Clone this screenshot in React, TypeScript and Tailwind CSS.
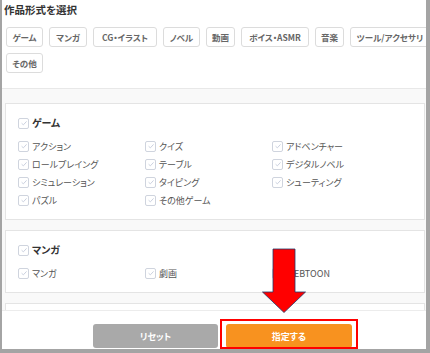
import React from "react";

const font = "font-['Noto_Sans_CJK_JP','Noto_Sans',sans-serif] [font-feature-settings:'palt']";

function Check() {
  return (
    <span className="w-[11px] h-[11px] shrink-0 border border-[#cfd4de] rounded-[2px] bg-white flex items-center justify-center">
      <svg viewBox="0 0 10 10" className="w-[8px] h-[8px]">
        <path d="M2 5.3 L4.2 7.3 L8.2 3" stroke="#c4cbdb" strokeWidth="1.1" fill="none" />
      </svg>
    </span>
  );
}

function Item({ label }: { label: string }) {
  return (
    <div className="h-[18px] flex items-center gap-[3px]">
      <Check />
      <span className="text-[9px] text-[#555] leading-none">{label}</span>
    </div>
  );
}

function Card({ title, items }: { title: string; items: string[] }) {
  return (
    <div className="shrink-0 bg-white border border-[#e4e4e4] pl-[12px] pt-[13px] pb-[10px]">
      <div className="h-[12px] flex items-center gap-[3px]">
        <Check />
        <span className="text-[10px] font-bold text-[#333] leading-none">{title}</span>
      </div>
      <div className="mt-[8px] grid grid-cols-[127px_127px_127px]">
        {items.map((it) => (
          <Item key={it} label={it} />
        ))}
      </div>
    </div>
  );
}

const tags: [string, number][] = [
  ["ゲーム", 37],
  ["マンガ", 38],
  ["CG・イラスト", 64],
  ["ノベル", 37],
  ["動画", 29],
  ["ボイス・ASMR", 68],
  ["音楽", 29],
  ["ツール/アクセサリ", 80],
];

function Tag({ label, w }: { label: string; w: number }) {
  return (
    <div
      className="h-[20px] shrink-0 border border-[#dcdcdc] rounded-[3px] bg-white flex items-center justify-center text-[8.5px] font-bold text-[#666] leading-none"
      style={{ width: w }}
    >
      {label}
    </div>
  );
}

export default function App() {
  return (
    <div className={`relative w-[430px] h-[353px] bg-[#a4a4a4] pl-[2px] pr-[4px] pb-[4px] ${font}`}>
      <div className="w-full h-full bg-white flex flex-col overflow-hidden">
        <div className="h-[89px] shrink-0 border-b border-[#e8e8e8]">
          <div className="h-[21px] pl-[2px] flex items-center text-[10.5px] font-bold text-[#333] leading-none">
            作品形式を選択
          </div>
          <div className="pl-[4px] mt-[6px] flex gap-[6px] w-[460px]">
            {tags.map(([l, w]) => (
              <Tag key={l} label={l} w={w} />
            ))}
          </div>
          <div className="pl-[4px] mt-[6px] flex gap-[6px]">
            <Tag label="その他" w={37} />
          </div>
        </div>
        <div className="flex-1 bg-[#f9f9f9] pl-[3px] pr-[1px] pt-[14px] overflow-hidden flex flex-col gap-[10px]">
          <Card
            title="ゲーム"
            items={[
              "アクション",
              "クイズ",
              "アドベンチャー",
              "ロールプレイング",
              "テーブル",
              "デジタルノベル",
              "シミュレーション",
              "タイピング",
              "シューティング",
              "パズル",
              "その他ゲーム",
            ]}
          />
          <Card title="マンガ" items={["マンガ", "劇画", "WEBTOON"]} />
          <div className="shrink-0 h-[40px] bg-white border border-[#e4e4e4]" />
        </div>
        <div className="h-[39px] shrink-0 border-t border-[#ececec] bg-white flex pt-[13px] pl-[91px] gap-[8px]">
          <div className="w-[125px] h-[24px] rounded-[3px] bg-[#a9a9a9] flex items-center justify-center text-[9px] font-bold text-white leading-none">
            リセット
          </div>
          <div className="w-[126px] h-[24px] rounded-[3px] bg-[#f8921f] flex items-center justify-center text-[9px] font-bold text-white leading-none">
            指定する
          </div>
        </div>
      </div>
      <div className="absolute left-[220px] top-[319px] w-[138px] h-[30px] border-2 border-[#ff0000]" />
      <svg className="absolute left-0 top-0" width="430" height="353" viewBox="0 0 430 353">
        <polygon
          points="273,249 295,249 295,292 305.5,292 284,312.5 262.5,292 273,292"
          fill="#ff0000"
          stroke="#1f3a6b"
          strokeWidth="0.8"
        />
      </svg>
    </div>
  );
}
